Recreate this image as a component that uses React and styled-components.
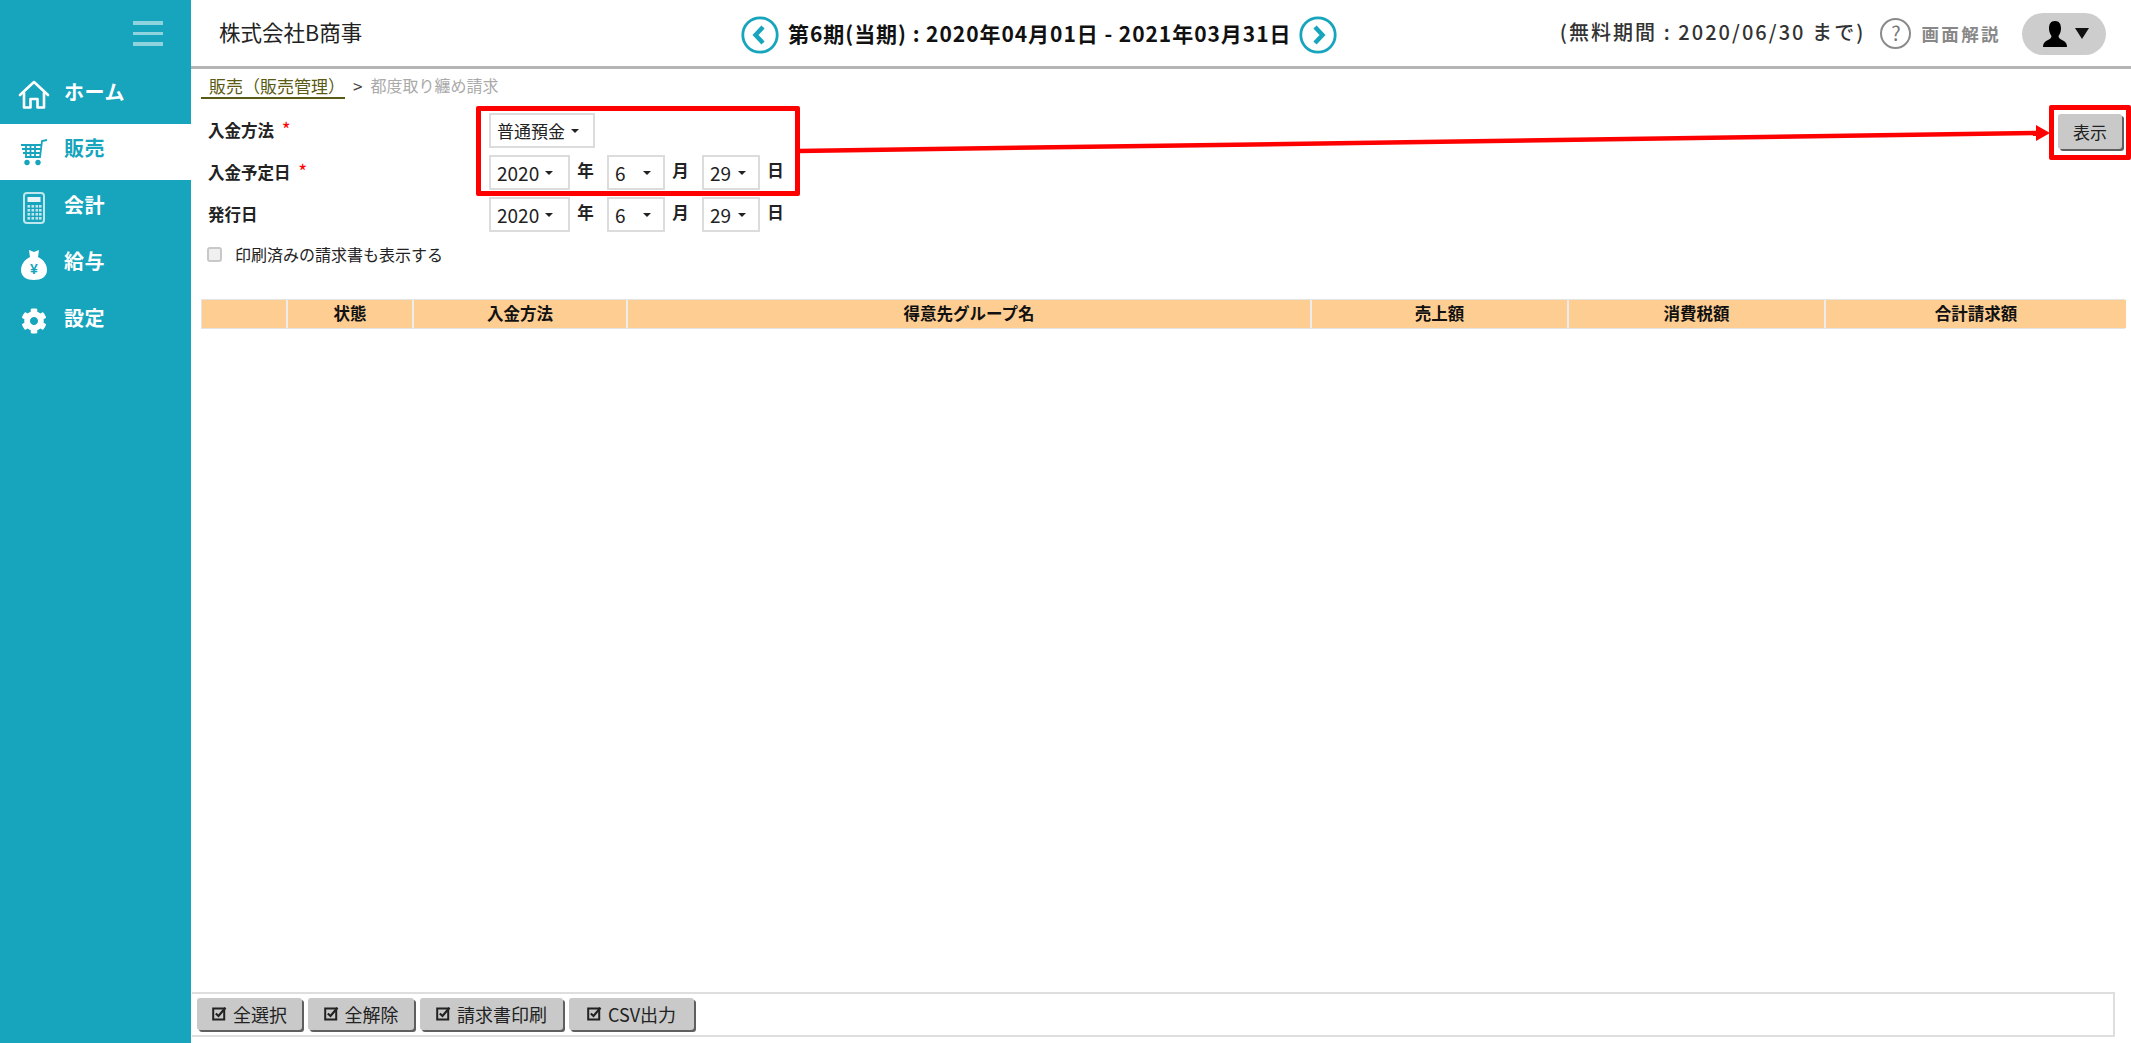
import React from "react"
import styled, { createGlobalStyle } from "styled-components"
import { FaCog } from "react-icons/fa"

const TEAL = "#17a5bd"

const GlobalStyle = createGlobalStyle`
  html, body {
    margin: 0;
    padding: 0;
    background: #fff;
  }
  body {
    font-family: "Noto Sans CJK JP", "Noto Sans", "Liberation Sans", sans-serif;
    color: #222;
  }
  * {
    box-sizing: border-box;
  }
`

const HomeIcon = () => (
  <svg width="32" height="30" viewBox="0 0 32 30" fill="none" stroke="#fff" strokeWidth="2.6" strokeLinejoin="round" strokeLinecap="round">
    <path d="M2 15 L16 2 L30 15" />
    <path d="M6 13 V27.5 H12.5 V19 H19.5 V27.5 H26 V13" />
  </svg>
)

const CartIcon = () => (
  <svg width="28" height="28" viewBox="0 0 28 28" fill="none" stroke={TEAL} strokeWidth="1.8">
    <path d="M27 2 L22 3 L20 19 H5" />
    <path d="M1 7 H21 M2 11 H20.5 M3 15 H20 M6 7 V19 M10.5 7 V19 M15 7 V19" />
    <circle cx="7" cy="24.5" r="1.8" fill={TEAL} />
    <circle cx="18" cy="24.5" r="1.8" fill={TEAL} />
  </svg>
)

const CalcIcon = () => (
  <svg width="22" height="32" viewBox="0 0 22 32">
    <rect x="1" y="1" width="20" height="30" rx="3" fill="none" stroke="#bfe6ee" strokeWidth="2" />
    <rect x="4.5" y="5" width="13" height="5" fill="#e8f6f9" />
    {[13, 17, 21, 25].map((y) =>
      [4.5, 8.5, 12.5, 16].map((x) => <rect key={`${x}-${y}`} x={x} y={y} width="2.6" height="2.6" fill="#bfe6ee" />)
    )}
  </svg>
)

const BagIcon = () => (
  <svg width="26" height="32" viewBox="0 0 26 32">
    <path d="M8 1 L13 3 L18 1 L17 8 C23 11 26 16 26 21 C26 28 20 31 13 31 C6 31 0 28 0 21 C0 16 3 11 9 8 Z" fill="#fff" />
    <text x="13" y="25" textAnchor="middle" fontSize="14" fontWeight="700" fontFamily="Liberation Sans, sans-serif" fill={TEAL}>
      ¥
    </text>
  </svg>
)

const CheckIcon = () => (
  <svg width="15" height="15" viewBox="0 0 15 15" fill="none">
    <rect x="1.2" y="2.5" width="11" height="11" stroke="#222" strokeWidth="2" />
    <path d="M3.8 7.5 L6.5 10 L13.5 1.8" stroke="#222" strokeWidth="2.2" />
  </svg>
)

const Chevron = ({ dir }) => (
  <svg width="38" height="38" viewBox="0 0 38 38" fill="none" stroke={TEAL}>
    <circle cx="19" cy="19" r="17.2" strokeWidth="2.8" />
    <path d={dir === "left" ? "M22 11 L14.5 19 L22 27" : "M16 11 L23.5 19 L16 27"} strokeWidth="4.4" />
  </svg>
)

const PersonIcon = () => (
  <svg width="24" height="26" viewBox="0 0 24 26" fill="#000">
    <path d="M12 0 C16.5 0 18 3.5 18 7.5 C18 11 16.5 13.5 15.5 15 C15.5 17 17 18 20 19.5 C23 21 24 23 24 26 H0 C0 23 1 21 4 19.5 C7 18 8.5 17 8.5 15 C7.5 13.5 6 11 6 7.5 C6 3.5 7.5 0 12 0 Z" />
  </svg>
)

const navItems = [
  { label: "ホーム", icon: <HomeIcon /> },
  { label: "販売", icon: <CartIcon />, active: true },
  { label: "会計", icon: <CalcIcon /> },
  { label: "給与", icon: <BagIcon /> },
  { label: "設定", icon: <FaCog size={26} color="#fff" /> },
]

const columns = [
  { label: "", width: 86 },
  { label: "状態", width: 126 },
  { label: "入金方法", width: 214 },
  { label: "得意先グループ名", width: 684 },
  { label: "売上額", width: 257 },
  { label: "消費税額", width: 257 },
  { label: "合計請求額", width: 300 },
]

const footerButtons = [
  { label: "全選択", width: 105 },
  { label: "全解除", width: 106 },
  { label: "請求書印刷", width: 143 },
  { label: "CSV出力", width: 125 },
]

const DateSelects = () => (
  <S.DateRow>
    <S.Select $width={81}>
      2020 <S.Caret />
    </S.Select>
    <S.Unit>年</S.Unit>
    <S.Select $width={58} $spread>
      6 <S.Caret />
    </S.Select>
    <S.Unit>月</S.Unit>
    <S.Select $width={58} $spread>
      29 <S.Caret />
    </S.Select>
    <S.Unit>日</S.Unit>
  </S.DateRow>
)

export default function App() {
  return (
    <S.Page>
      <GlobalStyle />
      <S.Sidebar>
        <S.Burger>
          <span />
          <span />
          <span />
        </S.Burger>
        {navItems.map((item) => (
          <S.NavItem key={item.label} $active={item.active}>
            <S.NavIcon>{item.icon}</S.NavIcon>
            <S.NavLabel>{item.label}</S.NavLabel>
          </S.NavItem>
        ))}
      </S.Sidebar>

      <S.Main>
        <S.Header>
          <S.Company>株式会社B商事</S.Company>
          <S.Period>
            <Chevron dir="left" />
            <S.PeriodText>第6期(当期) : 2020年04月01日 - 2021年03月31日</S.PeriodText>
            <Chevron dir="right" />
          </S.Period>
          <S.HeaderRight>
            <S.Trial>(無料期間 : 2020/06/30 まで)</S.Trial>
            <S.Help>?</S.Help>
            <S.HelpText>画面解説</S.HelpText>
            <S.UserPill>
              <PersonIcon />
              <S.UserCaret />
            </S.UserPill>
          </S.HeaderRight>
        </S.Header>

        <S.Content>
          <S.Breadcrumb>
            <S.CrumbLink>販売（販売管理）</S.CrumbLink>
            <S.CrumbSep>&gt;</S.CrumbSep>
            <S.CrumbCurrent>都度取り纏め請求</S.CrumbCurrent>
          </S.Breadcrumb>

          <S.FormArea>
            <S.Form>
              <S.Label>
                入金方法 <S.Required>*</S.Required>
              </S.Label>
              <S.DateRow>
                <S.Select $width={106} $small>
                  普通預金 <S.Caret />
                </S.Select>
              </S.DateRow>
              <S.Label>
                入金予定日 <S.Required>*</S.Required>
              </S.Label>
              <DateSelects />
              <S.Label>発行日</S.Label>
              <DateSelects />
            </S.Form>
            <S.ShowButton>表示</S.ShowButton>
          </S.FormArea>

          <S.CheckRow>
            <S.CheckBox />
            印刷済みの請求書も表示する
          </S.CheckRow>

          <S.Table>
            {columns.map((col, i) => (
              <S.HeadCell key={i} $width={col.width}>
                {col.label}
              </S.HeadCell>
            ))}
          </S.Table>
        </S.Content>

        <S.Toolbar>
          {footerButtons.map((btn) => (
            <S.ToolButton key={btn.label} $width={btn.width}>
              <CheckIcon />
              {btn.label}
            </S.ToolButton>
          ))}
        </S.Toolbar>
      </S.Main>

      <S.RedBoxForm />
      <S.RedBoxButton />
      <S.ArrowLayer width="2131" height="1043" viewBox="0 0 2131 1043">
        <line x1="798" y1="151" x2="2040" y2="133" stroke="#f00" strokeWidth="4.5" />
        <polygon points="2036,125 2050,133 2036,141" fill="#f00" />
      </S.ArrowLayer>
    </S.Page>
  )
}

const S = {
  Page: styled.div`
    position: relative;
    display: flex;
    width: 100%;
    height: 100vh;
    overflow: hidden;
  `,
  Sidebar: styled.nav`
    flex: 0 0 191px;
    background: ${TEAL};
    display: flex;
    flex-direction: column;
  `,
  Burger: styled.div`
    height: 67px;
    padding: 21px 28px 0 0;
    display: flex;
    flex-direction: column;
    align-items: flex-end;
    gap: 7px;
    span {
      display: block;
      width: 30px;
      height: 3.5px;
      background: #8fd3df;
    }
  `,
  NavItem: styled.div`
    height: 56.5px;
    display: flex;
    align-items: center;
    font-size: 20px;
    font-weight: 700;
    color: ${(p) => (p.$active ? TEAL : "#fff")};
    background: ${(p) => (p.$active ? "#fff" : "transparent")};
  `,
  NavIcon: styled.span`
    flex: 0 0 64px;
    padding-left: 3px;
    display: flex;
    justify-content: center;
    align-items: center;
  `,
  NavLabel: styled.span`
    margin-top: -8px;
    letter-spacing: 0.5px;
  `,
  Main: styled.div`
    flex: 1;
    min-width: 0;
    display: flex;
    flex-direction: column;
  `,
  Header: styled.header`
    position: relative;
    height: 69px;
    flex: 0 0 69px;
    border-bottom: 3px solid #b4b4b4;
    display: flex;
    align-items: center;
    justify-content: space-between;
    padding: 0 25px 0 28px;
  `,
  Company: styled.div`
    font-size: 21.5px;
    color: #222;
    margin-top: -3px;
  `,
  Period: styled.div`
    position: absolute;
    left: 550px;
    top: 16px;
    display: flex;
    align-items: center;
    gap: 9px;
  `,
  PeriodText: styled.div`
    width: 502px;
    font-size: 21px;
    font-weight: 700;
    letter-spacing: 0.95px;
    color: #111;
    white-space: nowrap;
    margin-top: -4px;
  `,
  HeaderRight: styled.div`
    display: flex;
    align-items: center;
  `,
  Trial: styled.div`
    font-size: 20px;
    font-weight: 500;
    letter-spacing: 2.05px;
    color: #333;
    white-space: nowrap;
    margin-top: -4px;
  `,
  Help: styled.div`
    width: 31px;
    height: 31px;
    margin-left: 15px;
    border: 2.5px solid #8a8a8a;
    border-radius: 50%;
    color: #777;
    font-size: 20px;
    line-height: 25px;
    text-align: center;
  `,
  HelpText: styled.div`
    margin-left: 10px;
    font-size: 17.5px;
    font-weight: 700;
    letter-spacing: 2.4px;
    color: #888;
    white-space: nowrap;
  `,
  UserPill: styled.div`
    width: 84px;
    height: 42px;
    margin-left: 21px;
    margin-top: 1px;
    border-radius: 21px;
    background: #cdcdcd;
    display: flex;
    align-items: center;
    padding-left: 21px;
    gap: 8px;
  `,
  UserCaret: styled.span`
    width: 0;
    height: 0;
    border-left: 7px solid transparent;
    border-right: 7px solid transparent;
    border-top: 11px solid #111;
  `,
  Content: styled.div`
    flex: 1;
    min-height: 0;
    display: flex;
    flex-direction: column;
    padding: 0 6px 0 10px;
  `,
  Breadcrumb: styled.div`
    height: 44px;
    display: flex;
    align-items: flex-start;
    padding-top: 5px;
    font-size: 17px;
    line-height: 23px;
  `,
  CrumbLink: styled.span`
    color: #5a5a14;
    padding: 0 0 0 8px;
    width: 144px;
    white-space: nowrap;
    overflow: hidden;
    border-bottom: 2px solid #5a5a14;
  `,
  CrumbSep: styled.span`
    margin-left: 8px;
    color: #444;
  `,
  CrumbCurrent: styled.span`
    margin-left: 8px;
    font-size: 16px;
    color: #aaa;
  `,
  FormArea: styled.div`
    display: flex;
    justify-content: space-between;
    align-items: flex-start;
    padding-right: 3px;
  `,
  Form: styled.div`
    display: grid;
    grid-template-columns: 281px auto;
    grid-auto-rows: 35px;
    row-gap: 7px;
    padding-left: 7px;
    align-items: center;
  `,
  Label: styled.div`
    font-size: 16.5px;
    font-weight: 700;
    color: #222;
    white-space: nowrap;
    margin-top: -1px;
  `,
  Required: styled.span`
    color: #f00;
    margin-left: 4px;
    font-size: 19px;
    line-height: 16px;
    font-weight: 400;
  `,
  DateRow: styled.div`
    display: flex;
    align-items: center;
  `,
  Select: styled.div`
    width: ${(p) => p.$width}px;
    height: 35px;
    border: 2px solid #dcdcdc;
    background: #fff;
    display: flex;
    align-items: center;
    justify-content: ${(p) => (p.$spread ? "space-between" : "flex-start")};
    gap: 6px;
    padding: 0 12px 0 6px;
    font-size: ${(p) => (p.$small ? 17 : 19)}px;
    color: #222;
    white-space: nowrap;
  `,
  Caret: styled.span`
    flex: none;
    width: 0;
    height: 0;
    border-left: 4px solid transparent;
    border-right: 4px solid transparent;
    border-top: 4px solid #222;
  `,
  Unit: styled.span`
    width: 37px;
    padding-right: 6px;
    text-align: center;
    font-size: 16.5px;
    font-weight: 700;
    margin-top: -5px;
  `,
  ShowButton: styled.button`
    width: 64px;
    height: 35px;
    margin-top: 1px;
    border: none;
    border-radius: 3px;
    background: #c9c9c9;
    box-shadow: 2px 2px 0 #5f5f5f;
    font-family: inherit;
    font-size: 17px;
    color: #222;
    padding: 0;
  `,
  CheckRow: styled.div`
    height: 30px;
    margin-top: 7px;
    display: flex;
    align-items: center;
    padding-left: 6px;
    font-size: 16px;
    color: #222;
    white-space: nowrap;
  `,
  CheckBox: styled.span`
    width: 15px;
    height: 15px;
    margin-right: 13px;
    border: 2px solid #c8c8c8;
    border-radius: 3px;
    background: #f0f0f0;
  `,
  Table: styled.div`
    display: flex;
    margin-top: 30px;
    height: 30px;
    width: 1924px;
    border: 1px solid #e4e4e4;
  `,
  HeadCell: styled.div`
    flex: 0 0 ${(p) => p.$width}px;
    background: #fdcd92;
    border-right: 2px solid #ececec;
    text-align: center;
    font-size: 16.5px;
    font-weight: 700;
    line-height: 26px;
    color: #111;
    &:last-child {
      border-right: none;
    }
  `,
  Toolbar: styled.div`
    flex: 0 0 45px;
    margin: 0 16px 6px 1px;
    border: 2px solid #dedede;
    border-left: none;
    display: flex;
    align-items: center;
    gap: 6px;
    padding: 0 0 2px 5px;
  `,
  ToolButton: styled.button`
    width: ${(p) => p.$width}px;
    height: 32px;
    border: none;
    border-radius: 3px;
    background: #c9c9c9;
    box-shadow: 2px 2px 0 #5f5f5f;
    display: flex;
    align-items: center;
    justify-content: center;
    gap: 6px;
    font-family: inherit;
    font-size: 18px;
    color: #222;
    padding: 0;
    white-space: nowrap;
  `,
  RedBoxForm: styled.div`
    position: absolute;
    left: 476px;
    top: 106px;
    width: 324px;
    height: 90px;
    border: 5px solid #f00;
    border-radius: 2px;
    pointer-events: none;
  `,
  RedBoxButton: styled.div`
    position: absolute;
    left: 2049px;
    top: 105px;
    right: 0;
    height: 55px;
    border: 5px solid #f00;
    border-radius: 2px;
    pointer-events: none;
  `,
  ArrowLayer: styled.svg`
    position: absolute;
    left: 0;
    top: 0;
    pointer-events: none;
  `,
}
